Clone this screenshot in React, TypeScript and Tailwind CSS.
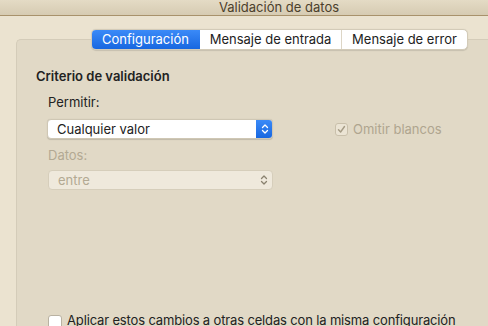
import React from "react";

function Stepper({ blue }: { blue: boolean }) {
  return (
    <svg width="8" height="12" viewBox="0 0 8 12" fill="none">
      <path d="M1.5 4.5 L4 2 L6.5 4.5" stroke={blue ? "#ffffff" : "#8a826f"} strokeWidth="1.3" strokeLinecap="round" strokeLinejoin="round" />
      <path d="M1.5 7.5 L4 10 L6.5 7.5" stroke={blue ? "#ffffff" : "#8a826f"} strokeWidth="1.3" strokeLinecap="round" strokeLinejoin="round" />
    </svg>
  );
}

export default function App() {
  return (
    <div
      className="w-[488px] h-[326px] bg-[#ebe3d0] overflow-hidden flex flex-col text-[13px] text-[#222]"
      style={{ fontFamily: "Inter, 'Noto Sans', sans-serif" }}
    >
      <div className="h-[16px] shrink-0 flex items-center justify-center pl-[70px] bg-gradient-to-b from-[#e4dbc5] to-[#d6cbb2] border-b border-[#a8926b] text-[#4b402c] leading-none">
        Validación de datos
      </div>
      <div className="flex justify-start pl-[91px] mt-[13px] relative z-10">
        <div className="flex h-[21px] rounded-[5px] border border-[#d3cbb8] bg-white shadow-[0_0.5px_1px_rgba(0,0,0,0.12)] overflow-hidden leading-none">
          <div className="w-[109px] flex items-center justify-center text-white bg-gradient-to-b from-[#3c8cf9] to-[#1565df] -my-px -ml-px">
            Configuración
          </div>
          <div className="w-[142px] flex items-center justify-center border-r border-[#ddd6c6]">
            Mensaje de entrada
          </div>
          <div className="w-[125px] flex items-center justify-center">Mensaje de error</div>
        </div>
      </div>
      <div className="ml-[16px] -mt-[11px] flex-1 bg-[#e1d9c6] border-l border-t border-[#d4ccb9] rounded-tl-[5px] flex flex-col pl-[19px]">
        <div className="mt-[28px] font-semibold leading-[16px]">Criterio de validación</div>
        <div className="mt-[10px] ml-[12px] leading-[16px]">Permitir:</div>
        <div className="mt-[9px] ml-[11px] flex items-center">
          <div className="w-[226px] h-[20px] flex rounded-[4px] bg-white border border-[#cfc7b4] shadow-[0_0.5px_1px_rgba(0,0,0,0.15)] overflow-hidden">
            <div className="flex-1 flex items-center pl-[9px] leading-none">Cualquier valor</div>
            <div className="w-[17px] flex items-center justify-center bg-gradient-to-b from-[#3c8cf9] to-[#1565df] -my-px -mr-px">
              <Stepper blue />
            </div>
          </div>
          <div className="ml-[62px] flex items-center text-[#afa58f] leading-none">
            <div className="w-[13px] h-[13px] rounded-[3px] border border-[#c9c0ab] bg-[#ebe4d4] flex items-center justify-center mr-[5px]">
              <svg width="9" height="9" viewBox="0 0 9 9" fill="none">
                <path d="M1.5 4.8 L3.6 7 L7.5 1.5" stroke="#a59b85" strokeWidth="1.4" strokeLinecap="round" strokeLinejoin="round" />
              </svg>
            </div>
            Omitir blancos
          </div>
        </div>
        <div className="mt-[8px] ml-[12px] leading-[16px] text-[#b3a993]">Datos:</div>
        <div className="mt-[7px] ml-[12px]">
          <div className="w-[225px] h-[20px] flex items-center justify-between rounded-[4px] bg-[#efe9dc] border border-[#d6cebb] pl-[9px] pr-[4px] text-[#b3a993] leading-none">
            <span>entre</span>
            <Stepper blue={false} />
          </div>
        </div>
        <div className="mt-[122px] ml-[12px] flex items-start leading-[16px]">
          <div className="w-[14px] h-[14px] rounded-[3px] bg-white border border-[#b9b2a2] mr-[5px] mt-[3px] shrink-0" />
          <span className="whitespace-nowrap tracking-[-0.15px]">Aplicar estos cambios a otras celdas con la misma configuración</span>
        </div>
      </div>
    </div>
  );
}
